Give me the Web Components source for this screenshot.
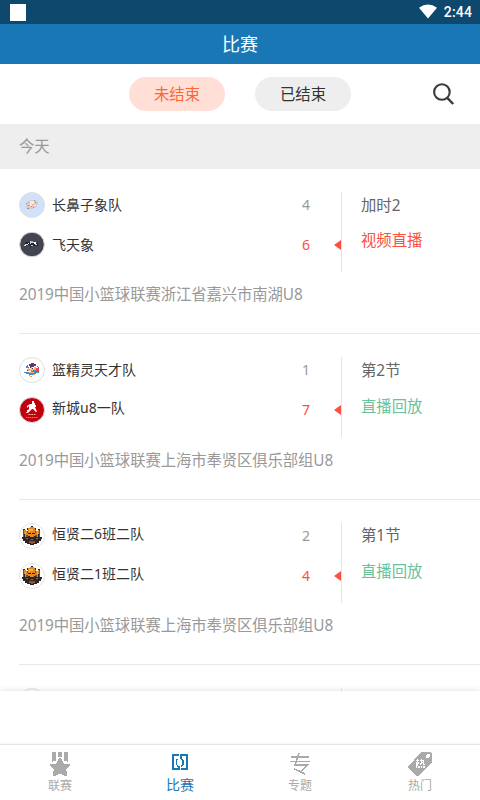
<!DOCTYPE html>
<html lang="zh-CN">
<head>
<meta charset="utf-8">
<title>比赛</title>
<style>
html,body{margin:0;height:100%;background:#fff}
body{font-family:"Noto Sans","Noto Sans CJK SC",sans-serif;overflow:hidden}
</style>
</head>
<body>
<match-app></match-app>
<script>
const define = (name, html, after) => {
  const t = document.createElement('template');
  t.innerHTML = '<style>*{box-sizing:border-box}svg{display:block}</style>' + html;
  customElements.define(name, class extends HTMLElement {
    constructor() {
      super();
      this.attachShadow({mode: 'open'}).appendChild(t.content.cloneNode(true));
    }
    connectedCallback() { if (after) after(this, this.shadowRoot); }
  });
};

define('status-bar', `<style>
:host{display:flex;height:24px;background:#0f486d;padding:0 8px 0 10px;align-items:center;color:#fff;font:500 14px/24px Roboto,sans-serif}
i{width:16px;height:17px;background:#fff;margin-right:auto;margin-top:1px}
svg{margin-right:7px;margin-top:-1px}
span{letter-spacing:.15px}
</style><i></i>
<svg width="18" height="15" viewBox="0 0 18 15"><path fill="#fff" d="M0 3.7Q9-2.7 18 3.7L9 14.6z"/></svg><span>2:44</span>`);

define('title-bar', `<style>
:host{display:flex;height:40px;background:#1977b5;color:#fff;font-size:18px;line-height:40px;align-items:center;justify-content:center}
</style><slot></slot>`);

define('filter-pill', `<style>
:host{display:block;width:96px;height:34px;border-radius:17px;background:#eee;color:#333;font-size:15.36px;line-height:35px;text-align:center}
:host([selected]){background:#ffdfd6;color:#ff6633}
</style><slot></slot>`);

define('filter-bar', `<style>
:host{display:grid;grid-template-columns:129px 96px 30px 96px 1fr 26px;height:60px;align-items:center;background:#fff;padding-right:22px}
filter-pill:nth-of-type(1){grid-column:2}
filter-pill:nth-of-type(2){grid-column:4}
svg{grid-column:6}
</style><filter-pill selected>未结束</filter-pill><filter-pill>已结束</filter-pill>
<svg width="26" height="26" viewBox="0 0 26 26" fill="none" stroke="#3a3a3a" stroke-width="2.1"><circle cx="9.9" cy="11" r="7.8"/><path d="M15 16.6l6.2 6.4" stroke-width="2.4"/></svg>`);

define('day-heading', `<style>
:host{display:block;height:45px;padding-left:19px;background:#eee;color:#999;font-size:15.36px;line-height:45px}
</style><slot></slot>`);

const tiger = `<circle cx="13" cy="13" r="12.5" fill="#fff" stroke="#e2e2e2"/>
<path fill="#e4891d" d="M9 5h2V4h4v1h2v3h2V7h1v9H5V7h2v1h2z"/>
<path fill="#8a4a1c" d="M4 6h1v8H4zm16 0h1v8h-1zM8 8h1v2H8zm8 0h1v2h-1zM7 12h2v2H7zm9 0h2v2h-2z"/>
<path fill="#f8ac48" d="M10 6h4v2h-3v1h-1zM6 9h1v2H6zm12 0h1v2h-1z"/>
<path fill="#2b2428" d="M12 3h2v1h-2zM8 5h1v2H8zm8 0h1v2h-1zM4 6h2v1H4zm15 0h2v1h-2zM9 10h3v1H9zm4 0h3v1h-3zM5 11h1v3H5zm14 0h1v3h-1z"/>
<path fill="#2b2428" d="M3 14h6v-1h2v1h4v-1h2v1h6v2h-1v2h-2v2h-2v1h-3v1h-4v-1H8v-1H6v-2H4v-2H3z"/>
<path fill="#9c4c22" d="M10 18h6v2h-2v1h-2v-1h-2z"/>
<path fill="#777078" d="M7 15h2v1H7zm5 1h2v1h-2zm5-1h2v1h-2z"/>`;
const logos = {
elephant: `<circle cx="13" cy="13" r="12.5" fill="#d0e1fb" stroke="#dedede"/>
<path fill="#dbcac8" d="M8 9h3V8h6v1h2v3h-1v3h-2v1h-2v1H9v-1H7v-5h1z"/>
<path fill="#f4e9e4" d="M11 9h4v3h-2v2h-2zM15 13h2v1h-2z"/>
<path fill="#a68c8b" d="M7 11h1v1H7zm2 2h1v1H9zm3 1h1v1h-1zm4-4h1v1h-1zM8 16h2v1H8zm6-1h1v1h-1zM15 8h1v1h-1z"/><path fill="#e7b08e" d="M9 10h1v1H9zM13 12h1v1h-1zM17 11h1v1h-1z"/>`,
flying: `<circle cx="13" cy="12.5" r="12.3" fill="#424550" stroke="#d9dadd"/>
<path fill="#20222b" d="M7 10h5v1h7v3h-6v1h-2v-2H6v-2h1z"/>
<path fill="#cbd2df" d="M11 9h1v1h3v1h-3v1h-1zM6 12h3v1H7v1H5v-1h1zM12 13h2v1h-2zM16 12h2v1h-2z"/>
<path fill="#d9954c" d="M12 9h2v1h-2zm4 1h1v1h-1z"/><path fill="#fff" d="M15 10h2v2h-2zM9 11h1v1H9z"/>`,
spirit: `<circle cx="13" cy="13" r="12.5" fill="#fff" stroke="#dedede"/>
<path fill="#603476" d="M10 7h2V6h3v1h2v2h-2v1h-4V9h-1z"/>
<path fill="#f2b184" d="M9 10h8v4h-2v2h-5v-2H8v-2h1z"/>
<path fill="#df4d45" d="M17 11h2v-1h1v5h-4v-2h1zM11 14h3v1h-3z"/>
<path fill="#3f8dca" d="M8 8h1v2h1v1H7V9h1zM5 15h5v1h5v-1h5v1h-3v1h-3v1h-4v-1H7v-1H5zM18 9h1v1h-1zM14 13h2v2h-2z"/>
<path fill="#fff" d="M10 10h2v2h-2zm3 0h2v2h-2zM10 14h2v1h-2z"/><path fill="#4b3034" d="M11 10h1v1h-1zm2 1h1v1h-1zM8 13h1v1H8z"/><path fill="#e2a740" d="M10 18h1v1h2v1h-2v-1h-1zm4-1h2v1h-2z"/>`,
newcity: `<circle cx="13" cy="13" r="12.5" fill="#c1000e" stroke="#ddd"/>
<path fill="#fff" d="M13 4h2v2h1v2h1v2h-1l2 5h-1l-3-3h-1l-2 2-2 2H7l3-4V9l-2 2V9l3-2h2zM8 13h1v1H8z"/>
<path stroke="#ffb2b2" stroke-width="1" stroke-dasharray="2 .7" d="M9.5 17.5h7"/><path stroke="#ef6b70" stroke-width="1.1" stroke-dasharray="1.5 .5" d="M7 20.5h12"/>`,
tiger, blank: `<circle cx="13" cy="13" r="12.5" fill="#fff" stroke="#ddd"/>`
};

define('team-row', `<style>
:host{display:grid;grid-template-columns:26px 1fr 20px;column-gap:7px;height:26px;align-items:center;color:#333;font-size:14px;line-height:26px}
b{font-weight:400;color:#999;text-align:right}
:host([lead]) b{color:#fb503f}
span{white-space:nowrap;transform:translateY(var(--dy,0px))}
</style><svg width="26" height="26" viewBox="0 0 26 26"></svg><span><slot></slot></span><b></b>`, (el, r) => {
  r.querySelector('svg').innerHTML = logos[el.getAttribute('logo')];
  r.querySelector('b').textContent = el.getAttribute('score') || '';
});

define('match-card', `<style>
:host{display:block;height:165px;padding:23px 0 0 19px}
.in{height:100%;border-bottom:1px solid #e9e9e9}
.top{display:grid;grid-template-columns:291px 32px 1fr;height:80px}
.teams{display:flex;flex-direction:column;gap:14px}
.arrow{border-right:1px solid #e4e4e4;display:flex;justify-content:flex-end;align-items:flex-start;padding-top:48px}
.arrow svg{display:none}
:host([live]) .arrow svg{display:block}
.info{padding:var(--info,1px) 0 0 19px;font-size:15.36px;color:#666;line-height:26px;display:flex;flex-direction:column;gap:var(--gap,10px)}
.link{color:#fb503f}
:host([replay]) .link{color:#68c39b}
.event{font-size:15.36px;color:#999;line-height:26px;padding-top:var(--event,10px);white-space:nowrap}
::slotted([slot=event]){letter-spacing:-.09px}
</style><div class="in"><div class="top"><div class="teams"><slot></slot></div>
<div class="arrow"><svg width="7" height="10" viewBox="0 0 7 10"><path fill="#fb503f" d="M7 0v10L0 5z"/></svg></div>
<div class="info"><div><slot name="period"></slot></div><div class="link"><slot name="link"></slot></div></div></div>
<div class="event"><slot name="event"></slot></div></div>`);

define('tab-item', `<style>
:host{display:flex;flex-direction:column;align-items:center;flex:1;color:#aaa;font-size:12px;padding-top:5px}
:host([active]){color:#1977b5;font-size:14px}
div{line-height:18px;margin-top:1px}
:host([active]) div{margin-top:0}
</style><svg width="24" height="26" viewBox="0 0 24 26" shape-rendering="crispEdges" fill="currentColor"></svg><div><slot></slot></div>`, (el, r) => {
  r.querySelector('svg').innerHTML = {
    medal: '<path d="M4 2h4v9H5v1H4zM10 2h4v5h-4zM16 2h4v10h-1v-1h-3z"/><path d="M11 8h2v1h1v2h1v2h1v1h6v2h-1v1h-1v1h-1v1h-1v2h1v5h-3v-1h-2v-1h-4v1H8v1H5v-5h1v-2H5v-1H4v-1H3v-1H2v-2h6v-1h1v-2h1V9h1z"/>',
    court: '<path d="M4 4h7v2H6v12h4v-2h2v4H4zM12 4h8v16h-7v-2h5V6h-4v2h-2zM8 9h2v1h-1v5h1v1h1v1H9v-2H8zM12 8h2v1h1v1h1v5h-1v1h-1v1h-1v-2h1v-5h-1V9h-1z"/>',
    topic: '<g fill="none" stroke="currentColor"><path stroke-width="2" d="M3 7h18"/><path d="M2 11.5h20"/><path stroke-width="1.6" d="M11 3L7 15.2h12L13.5 21M6 19l6 2.5 5 2.5"/></g>',
    tag: '<path d="M13 2h10v1h1v10h-1v1h-1v1h-1v1h-1v1h-1v1h-1v1h-1v1h-1v1h-1v1h-1v1h-1v1h-1v1h-1v1h-1v1h-2v-1H8v-1H7v-1H6v-1H5v-1H4v-1H3v-1H2v-1H1v-1H0v-2h1v-1h1v-1h1v-1h1v-1h1v-1h1V9h1V8h1V7h1V6h1V5h1V4h1V3h1z"/><circle cx="20" cy="6" r="2" fill="#fff"/><path fill="none" stroke="#fff" stroke-width="1.3" d="M8 10.5h3M9.6 9v6H8M8 13h3.4M12 10.5h3.6v4h.9M13.6 9v3.2L12 15M12.5 12.5h2M8.5 16v2M11 16v2M13.5 16v2M16 16v2"/>'
  }[el.getAttribute('icon')];
});

define('tab-bar', `<style>
:host{display:flex;height:56px;border-top:1px solid #e5e5e5;background:#fff;box-shadow:0 -1px 3px #0000000a}
</style><slot></slot>`);

define('match-app', `<style>
:host{display:flex;flex-direction:column;width:480px;height:800px;overflow:hidden;background:#fff}
.list{flex:1;min-height:0;overflow:hidden}
.banner{height:53px;background:#fff;box-shadow:0 0 5px #00000026}
.foot{position:relative}
</style>
<status-bar></status-bar><title-bar>比赛</title-bar><filter-bar></filter-bar><day-heading>今天</day-heading>
<div class="list">
<match-card live style="--gap:9px"><team-row logo="elephant" score="4">长鼻子象队</team-row><team-row logo="flying" score="6" lead>飞天象</team-row>
<span slot="period">加时2</span><span slot="link">视频直播</span><span slot="event">2019中国小篮球联赛浙江省嘉兴市南湖U8</span></match-card>
<match-card live replay style="height:166px;--event:11px"><team-row logo="spirit" score="1">篮精灵天才队</team-row><team-row logo="newcity" score="7" lead style="--dy:-2px">新城u8一队</team-row>
<span slot="period">第2节</span><span slot="link">直播回放</span><span slot="event">2019中国小篮球联赛上海市奉贤区俱乐部组U8</span></match-card>
<match-card live replay style="--info:0px"><team-row logo="tiger" score="2" style="--dy:-2px">恒贤二6班二队</team-row><team-row logo="tiger" score="4" lead style="--dy:-2px">恒贤二1班二队</team-row>
<span slot="period">第1节</span><span slot="link">直播回放</span><span slot="event">2019中国小篮球联赛上海市奉贤区俱乐部组U8</span></match-card>
<match-card><team-row logo="blank"></team-row></match-card>
</div>
<div class="foot"><div class="banner"></div>
<tab-bar><tab-item icon="medal">联赛</tab-item><tab-item icon="court" active>比赛</tab-item><tab-item icon="topic">专题</tab-item><tab-item icon="tag">热门</tab-item></tab-bar></div>`);
</script>
</body>
</html>
